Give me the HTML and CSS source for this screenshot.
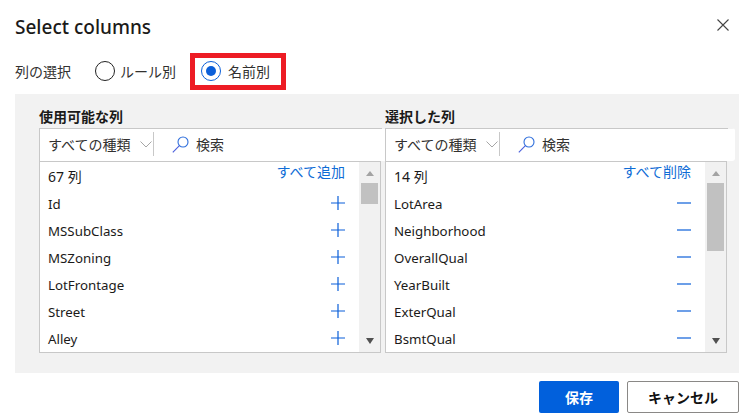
FILE: index.html
```html
<!DOCTYPE html>
<html lang="ja">
<head>
<meta charset="utf-8">
<title>Select columns</title>
<link rel="stylesheet" href="styles.css">
</head>
<body>
<main class="dialog">
  <header class="header">
    <h1 class="title">Select columns</h1>
    <button class="close" aria-label="閉じる">
      <svg width="12" height="12" viewBox="0 0 12 12"><path d="M.5.5l11 11M11.500.5l-11 11" fill="none" stroke="#444" stroke-width="1.100"/></svg>
    </button>
  </header>
  <div class="selector">
    <span class="selector-label">列の選択</span>
    <label class="option"><span class="radio"></span><span>ルール別</span></label>
    <label class="option option-marked"><span class="radio radio-on"></span><span>名前別</span></label>
  </div>
  <section class="panel">
    <div class="column">
      <div class="column-title">使用可能な列</div>
      <div class="toolbar">
        <span class="type">すべての種類</span>
        <svg class="chevron" width="12" height="7" viewBox="0 0 12 7"><path d="M.5.500L6 6l5.500-5.500" fill="none" stroke="#a6a6a6"/></svg>
        <span class="divider"></span>
        <svg class="search" width="17" height="17" viewBox="0 0 17 17"><circle cx="11" cy="6" r="5" fill="none" stroke="#2f6fdc" stroke-width="1.100"/><path d="M7.400 9.600L.8 16.300" stroke="#4a5fdc" stroke-width="1.100"/></svg>
        <span>検索</span>
      </div>
      <div class="list">
        <div class="rows">
          <div class="row row-count"><span>67 列</span><a class="bulk">すべて追加</a></div>
          <div class="row"><span>Id</span><svg class="act" width="14" height="14" viewBox="0 0 14 14"><path d="M7 0v14M0 7h14" stroke="#0b5fd9" stroke-width="1.200"/></svg></div>
          <div class="row"><span>MSSubClass</span><svg class="act" width="14" height="14" viewBox="0 0 14 14"><path d="M7 0v14M0 7h14" stroke="#0b5fd9" stroke-width="1.200"/></svg></div>
          <div class="row"><span>MSZoning</span><svg class="act" width="14" height="14" viewBox="0 0 14 14"><path d="M7 0v14M0 7h14" stroke="#0b5fd9" stroke-width="1.200"/></svg></div>
          <div class="row"><span>LotFrontage</span><svg class="act" width="14" height="14" viewBox="0 0 14 14"><path d="M7 0v14M0 7h14" stroke="#0b5fd9" stroke-width="1.200"/></svg></div>
          <div class="row"><span>Street</span><svg class="act" width="14" height="14" viewBox="0 0 14 14"><path d="M7 0v14M0 7h14" stroke="#0b5fd9" stroke-width="1.200"/></svg></div>
          <div class="row"><span>Alley</span><svg class="act" width="14" height="14" viewBox="0 0 14 14"><path d="M7 0v14M0 7h14" stroke="#0b5fd9" stroke-width="1.200"/></svg></div>
        </div>
        <div class="scrollbar">
          <span class="arrow arrow-up"></span>
          <span class="thumb thumb-short"></span>
          <span class="arrow arrow-down"></span>
        </div>
      </div>
    </div>
    <div class="column">
      <div class="column-title">選択した列</div>
      <div class="toolbar">
        <span class="type">すべての種類</span>
        <svg class="chevron" width="12" height="7" viewBox="0 0 12 7"><path d="M.5.500L6 6l5.500-5.500" fill="none" stroke="#a6a6a6"/></svg>
        <span class="divider"></span>
        <svg class="search" width="17" height="17" viewBox="0 0 17 17"><circle cx="11" cy="6" r="5" fill="none" stroke="#2f6fdc" stroke-width="1.100"/><path d="M7.400 9.600L.8 16.300" stroke="#4a5fdc" stroke-width="1.100"/></svg>
        <span>検索</span>
      </div>
      <div class="list">
        <div class="rows">
          <div class="row row-count"><span>14 列</span><a class="bulk">すべて削除</a></div>
          <div class="row"><span>LotArea</span><svg class="act" width="14" height="14" viewBox="0 0 14 14"><path d="M0 7h14" stroke="#0b5fd9" stroke-width="1.200"/></svg></div>
          <div class="row"><span>Neighborhood</span><svg class="act" width="14" height="14" viewBox="0 0 14 14"><path d="M0 7h14" stroke="#0b5fd9" stroke-width="1.200"/></svg></div>
          <div class="row"><span>OverallQual</span><svg class="act" width="14" height="14" viewBox="0 0 14 14"><path d="M0 7h14" stroke="#0b5fd9" stroke-width="1.200"/></svg></div>
          <div class="row"><span>YearBuilt</span><svg class="act" width="14" height="14" viewBox="0 0 14 14"><path d="M0 7h14" stroke="#0b5fd9" stroke-width="1.200"/></svg></div>
          <div class="row"><span>ExterQual</span><svg class="act" width="14" height="14" viewBox="0 0 14 14"><path d="M0 7h14" stroke="#0b5fd9" stroke-width="1.200"/></svg></div>
          <div class="row"><span>BsmtQual</span><svg class="act" width="14" height="14" viewBox="0 0 14 14"><path d="M0 7h14" stroke="#0b5fd9" stroke-width="1.200"/></svg></div>
        </div>
        <div class="scrollbar">
          <span class="arrow arrow-up"></span>
          <span class="thumb thumb-long"></span>
          <span class="arrow arrow-down"></span>
        </div>
      </div>
    </div>
  </section>
  <footer class="footer">
    <button class="btn btn-primary">保存</button>
    <button class="btn btn-secondary">キャンセル</button>
  </footer>
</main>
</body>
</html>
```
FILE: styles.css
```css
* { box-sizing: border-box; }
html, body { margin: 0; padding: 0; background: #fff; }
body {
  width: 750px;
  height: 420px;
  overflow: hidden;
  font-family: "Noto Sans", "Noto Sans CJK JP", sans-serif;
  font-size: 14px;
  color: #1b1a19;
}
.dialog { width: 750px; height: 420px; padding: 0 11px 0 15px; display: flex; flex-direction: column; }
.header { height: 53px; display: flex; justify-content: space-between; align-items: flex-start; }
.title { margin: 13px 0 0; font-size: 19px; line-height: 28px; font-weight: 500; }
.close { border: 0; background: none; padding: 0; margin: 19px 10px 0 0; width: 12px; height: 12px; display: block; line-height: 0; }
.selector { height: 37px; display: flex; align-items: center; padding-bottom: 1px; }
.selector-label { width: 80px; color: #323130; padding-bottom: 1px; }
.option { display: flex; align-items: center; gap: 5px; color: #323130; width: 95px; }
.option-marked {
  width: 96px;
  height: 37px;
  border: 5px solid #ed1c24;
  padding-left: 6px;
  gap: 7px;
}
.radio { width: 20px; height: 20px; border: 1.500px solid #222; border-radius: 50%; display: block; flex: none; }
.radio-on { border: 1px solid #0b5fd9; position: relative; }
.radio-on::after { content: ""; position: absolute; left: 4px; top: 4px; width: 10px; height: 10px; border-radius: 50%; background: #0b5fd9; }
.panel {
  margin-top: 4px;
  height: 279px;
  width: 724px;
  background: #f2f2f2;
  padding: 12px 12px 20px 24px;
  display: grid;
  grid-template-columns: 342px 342px;
  column-gap: 4px;
}
.column { display: flex; flex-direction: column; min-width: 0; }
.column-title { height: 22px; line-height: 21px; font-weight: 600; font-size: 14px; }
.toolbar {
  height: 33px;
  margin-right: -8px;
  display: flex;
  align-items: center;
  background: linear-gradient(to right, #c8c8c8 342px, #f2f2f2 342px) 0 0 / 100% 1px no-repeat, #fff;
  border-left: 1px solid #c8c8c8;
  padding: 0 0 1px 8px;
  color: #323130;
  border-radius: 0 3px 3px 0;
}
.type { width: 85px; }
.chevron { margin: 0 0 0 7px; }
.divider { width: 1px; height: 24px; background: #c8c8c8; margin: 0 18px 0 1px; }
.search { margin-right: 7px; }
.list {
  height: 192px;
  display: flex;
  background: #fff;
  border: 1px solid #c8c8c8;
  position: relative;
}
.rows { flex: 1; min-width: 0; padding: 1px 14px 0 8px; overflow: hidden; }
.row { height: 27px; display: flex; justify-content: space-between; align-items: center; color: #1b1a19; font-size: 13.300px; padding-top: 1px; }
.row-count { font-size: 14px; padding: 0 0 1px; }
.act { display: block; margin-bottom: 3px; }
.bulk { color: #0f6cd6; align-self: flex-start; line-height: 20px; margin-top: -1px; }
.scrollbar { width: 21px; background: #f1f1f1; display: flex; flex-direction: column; align-items: center; padding-top: 9px; }
.arrow { width: 0; height: 0; border-left: 4.500px solid transparent; border-right: 4.500px solid transparent; display: block; }
.arrow-up { border-bottom: 5px solid #a3a3a3; }
.arrow-down { border-top: 6px solid #505050; margin-top: auto; margin-bottom: 8px; }
.thumb { width: 17px; background: #c1c1c1; margin-top: 7px; display: block; }
.thumb-short { height: 21px; }
.thumb-long { height: 68px; }
.footer { margin-top: 8px; width: 724px; display: flex; justify-content: flex-end; gap: 8px; }
.btn { height: 32px; font-family: inherit; font-size: 14px; font-weight: 700; border-radius: 2px; padding: 0 0 1px; }
.btn-primary { width: 80px; background: #0160dc; color: #fff; border: 0; }
.btn-secondary { width: 112px; background: #fff; color: #111; border: 1px solid #8a8886; }
```
